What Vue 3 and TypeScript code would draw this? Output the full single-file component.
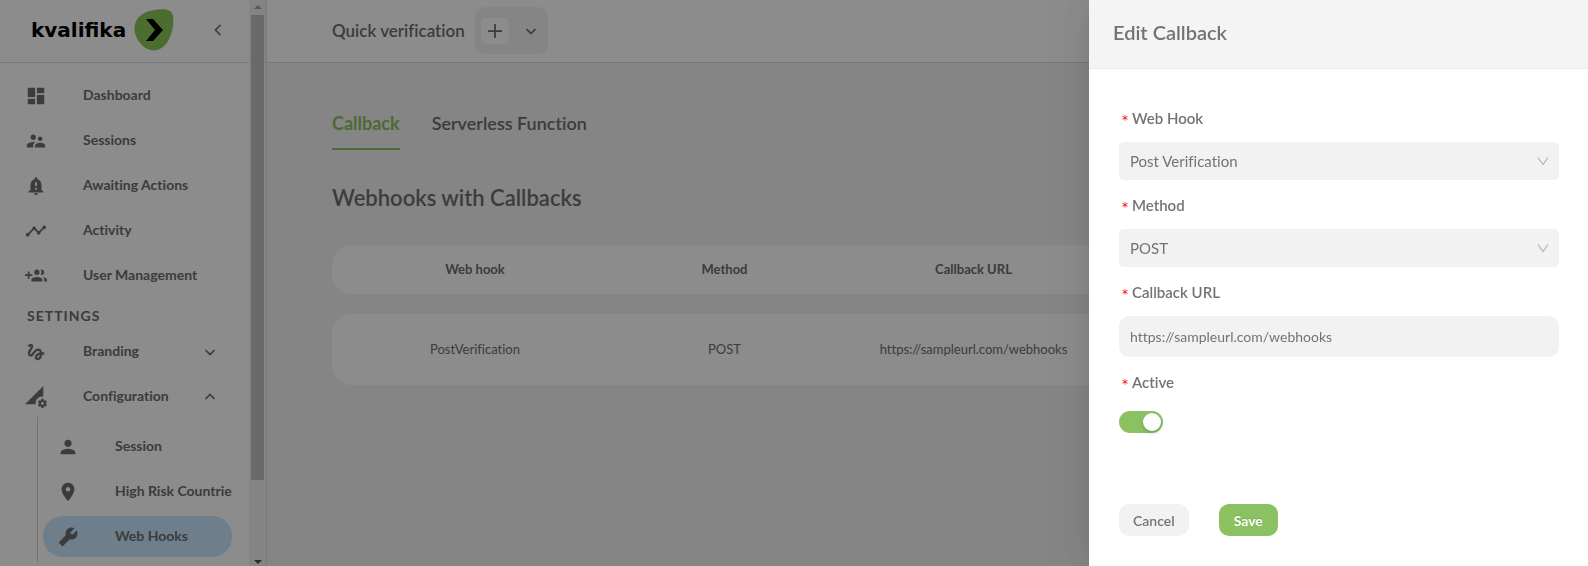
<script setup lang="ts">
import { ref } from 'vue'

interface NavItem {
  label: string
  icon: string
  box?: string
  toggle?: 'down' | 'up'
  active?: boolean
}

const icons = {
  dashboard: 'M3 13h8V3H3v10zm0 8h8v-6H3v6zm10 0h8V11h-8v10zm0-18v6h8V3h-8z',
  people:
    'M16.5 12c1.38 0 2.49-1.12 2.49-2.5S17.88 7 16.5 7C15.12 7 14 8.12 14 9.5s1.12 2.5 2.5 2.5zM9 11c1.66 0 2.99-1.34 2.99-3S10.66 5 9 5C7.34 5 6 6.34 6 8s1.34 3 3 3zm7.5 3c-1.83 0-5.5.92-5.5 2.75V19h11v-2.25c0-1.83-3.67-2.75-5.5-2.75zM9 13c-2.33 0-7 1.17-7 3.5V19h7v-2.25c0-.85.33-2.34 2.37-3.47C10.5 13.1 9.66 13 9 13z',
  bell:
    'M18 16v-5c0-3.07-1.64-5.64-4.5-6.32V4c0-.83-.67-1.5-1.5-1.5s-1.5.67-1.5 1.5v.68C7.63 5.36 6 7.92 6 11v5l-2 2v1h16v-1l-2-2zm-5 0h-2v-2h2v2zm0-4h-2V8h2v4zm-1 10c1.1 0 2-.9 2-2h-4c0 1.1.89 2 2 2z',
  timeline:
    'M23 8c0 1.1-.9 2-2 2-.18 0-.35-.02-.51-.07l-3.56 3.55c.05.16.07.34.07.52 0 1.1-.9 2-2 2s-2-.9-2-2c0-.18.02-.36.07-.52l-2.55-2.55c-.16.05-.34.07-.52.07s-.36-.02-.52-.07l-4.55 4.56c.05.16.07.33.07.51 0 1.1-.9 2-2 2s-2-.9-2-2 .9-2 2-2c.18 0 .35.02.51.07l4.56-4.55C8.02 9.36 8 9.18 8 9c0-1.1.9-2 2-2s2 .9 2 2c0 .18-.02.36-.07.52l2.55 2.55c.16-.05.34-.07.52-.07s.36.02.52.07l3.55-3.56C19.02 8.35 19 8.18 19 8c0-1.1.9-2 2-2s2 .9 2 2z',
  groupAdd:
    'M8 10H5V7H3v3H0v2h3v3h2v-3h3v-2zm10 1c1.66 0 2.99-1.34 2.99-3S19.66 5 18 5c-.32 0-.63.05-.91.14.57.81.9 1.79.9 2.86s-.34 2.04-.9 2.86c.28.09.59.14.91.14zm-5 0c1.66 0 2.99-1.34 2.99-3S14.66 5 13 5c-1.66 0-3 1.34-3 3s1.34 3 3 3zm6.62 2.16c.83.73 1.38 1.66 1.38 2.84v2h3v-2c0-1.54-2.37-2.49-4.38-2.84zM13 13c-2 0-6 1-6 3v2h12v-2c0-2-4-3-6-3z',
  gesture:
    'M4.59 6.89c.7-.71 1.4-1.35 1.71-1.22.5.2 0 1.03-.3 1.52-.25.42-2.86 3.89-2.86 6.31 0 1.28.48 2.34 1.34 2.98.75.56 1.74.73 2.64.46 1.07-.31 1.95-1.4 3.06-2.77 1.21-1.49 2.83-3.44 4.08-3.44 1.63 0 1.65 1.01 1.76 1.79-3.78.64-5.38 3.67-5.38 5.37 0 1.7 1.44 3.09 3.21 3.09 1.63 0 4.29-1.33 4.69-6.1H21v-2.5h-2.47c-.15-1.65-1.09-4.2-4.03-4.2-2.25 0-4.18 1.91-4.94 2.84-.58.73-2.06 2.48-2.29 2.72-.25.3-.68.84-1.11.84-.45 0-.72-.83-.36-1.92.35-1.09 1.4-2.86 1.85-3.52.78-1.14 1.3-1.92 1.3-3.28C8.95 3.69 7.31 3 6.44 3 5.12 3 3.97 4 3.72 4.25c-.36.36-.66.66-.88.93l1.75 1.71zm9.29 11.66c-.31 0-.74-.26-.74-.72 0-.6.73-2.2 2.87-2.76-.3 2.69-1.43 3.48-2.13 3.48z',
  dataSetting:
    'M18.99 11.5c.34 0 .67.03 1 .07L20 0 0 20h11.56c-.04-.33-.07-.66-.07-1 0-4.14 3.36-7.5 7.5-7.5zm3.71 7.99c.02-.16.04-.32.04-.49 0-.17-.01-.33-.04-.49l1.06-.83c.09-.08.12-.21.06-.32l-1-1.73c-.06-.11-.19-.15-.31-.11l-1.24.5c-.26-.2-.54-.37-.85-.49l-.19-1.32c-.01-.12-.12-.21-.24-.21h-2c-.12 0-.23.09-.25.21l-.19 1.32c-.3.13-.59.29-.85.49l-1.24-.5c-.11-.04-.24 0-.31.11l-1 1.73c-.06.11-.04.24.06.32l1.06.83c-.02.16-.03.32-.03.49 0 .17.01.33.03.49l-1.06.83c-.09.08-.12.21-.06.32l1 1.73c.06.11.19.15.31.11l1.24-.5c.26.2.54.37.85.49l.19 1.32c.02.12.12.21.25.21h2c.12 0 .23-.09.25-.21l.19-1.32c.3-.13.59-.29.84-.49l1.25.5c.11.04.24 0 .31-.11l1-1.73c.06-.11.03-.24-.06-.32l-1.07-.83zm-3.71 1.01c-.83 0-1.5-.67-1.5-1.5s.67-1.5 1.5-1.5 1.5.67 1.5 1.5-.67 1.5-1.5 1.5z',
  person:
    'M12 12c2.21 0 4-1.79 4-4s-1.79-4-4-4-4 1.79-4 4 1.79 4 4 4zm0 2c-2.67 0-8 1.34-8 4v2h16v-2c0-2.66-5.33-4-8-4z',
  place:
    'M12 2C8.13 2 5 5.13 5 9c0 5.25 7 13 7 13s7-7.75 7-13c0-3.87-3.13-7-7-7zm0 9.5c-1.38 0-2.5-1.12-2.5-2.5s1.12-2.5 2.5-2.5 2.5 1.12 2.5 2.5-1.12 2.5-2.5 2.5z',
  tool:
    'M865.3 244.7c-.3-.3-61.1 59.8-182.1 180.6l-84.9-84.9 180.9-180.9c-95.2-57.3-217.5-42.6-296.8 36.7A244.42 244.42 0 00419 432l1.8 6.7-283.5 283.4c-6.2 6.2-6.2 16.4 0 22.6l141.4 141.4c6.2 6.2 16.4 6.2 22.6 0l283.3-283.3 6.7 1.8c83.7 22.3 173.6-.9 236-63.3 79.4-79.3 94.1-201.6 38-296.6z',
}

const mainItems: NavItem[] = [
  { label: 'Dashboard', icon: icons.dashboard },
  { label: 'Sessions', icon: icons.people },
  { label: 'Awaiting Actions', icon: icons.bell },
  { label: 'Activity', icon: icons.timeline },
  { label: 'User Management', icon: icons.groupAdd },
]

const settingsItems: NavItem[] = [
  { label: 'Branding', icon: icons.gesture, toggle: 'down' },
  { label: 'Configuration', icon: icons.dataSetting, toggle: 'up' },
]

const subItems: NavItem[] = [
  { label: 'Session', icon: icons.person },
  { label: 'High Risk Countrie', icon: icons.place },
  { label: 'Web Hooks', icon: icons.tool, box: '64 64 896 896', active: true },
]

const rows = [{ hook: 'PostVerification', method: 'POST', url: 'https://sampleurl.com/webhooks' }]

const hook = ref('Post Verification')
const method = ref('POST')
const url = ref('https://sampleurl.com/webhooks')
const active = ref(true)
</script>

<template>
  <div class="app">
    <aside class="sidebar">
      <div class="brand">
        <a class="logo" href="#">
          <span>kvalifika</span>
          <svg width="40" height="42" viewBox="0 0 40 42" aria-hidden="true">
            <path d="M20 1C28-.5 36 0 38 4c2.500 6 1.500 16-2 24-3 8-9 13.500-17 13.500C9 41 0 29 .5 19 1 8 9 3 20 1z" fill="#8ac758" />
            <path d="M12 10h7l10 11-10 11h-7l9-11z" fill="#000" />
          </svg>
        </a>
        <button class="collapse" type="button" aria-label="Collapse menu">
          <svg width="12" height="12" viewBox="0 0 12 12"><path d="M8.500 1l-5 5 5 5" /></svg>
        </button>
      </div>
      <nav class="nav">
        <a v-for="item in mainItems" :key="item.label" class="item" href="#">
          <svg class="icon" viewBox="0 0 24 24" aria-hidden="true"><path :d="item.icon" /></svg>
          <span>{{ item.label }}</span>
        </a>
        <h2 class="group">SETTINGS</h2>
        <button v-for="item in settingsItems" :key="item.label" class="item" type="button">
          <svg class="icon" viewBox="0 0 24 24" aria-hidden="true"><path :d="item.icon" /></svg>
          <span>{{ item.label }}</span>
          <svg class="chevron" :class="item.toggle" viewBox="0 0 12 12" aria-hidden="true"><path d="M1.500 4L6 8.500 10.500 4" /></svg>
        </button>
        <div class="sub">
          <a v-for="item in subItems" :key="item.label" class="item" :class="{ active: item.active }" href="#">
            <svg class="icon" :viewBox="item.box ?? '0 0 24 24'" aria-hidden="true"><path :d="item.icon" /></svg>
            <span>{{ item.label }}</span>
          </a>
        </div>
      </nav>
    </aside>
    <div class="scroll" aria-hidden="true">
      <svg width="8" height="4" viewBox="0 0 8 4"><path d="M0 4l4-4 4 4z" fill="#a3a3a3" /></svg>
      <div class="thumb"></div>
      <svg width="8" height="4" viewBox="0 0 8 4"><path d="M0 0l4 4 4-4z" fill="#505050" /></svg>
    </div>

    <main class="main">
      <header class="topbar">
        <h1>Quick verification</h1>
        <div class="tools">
          <button class="add" type="button" aria-label="Add">
            <svg width="14" height="14" viewBox="0 0 14 14"><path d="M7 0v14M0 7h14" /></svg>
          </button>
          <button class="more" type="button" aria-label="More">
            <svg width="12" height="12" viewBox="0 0 12 12"><path d="M1.500 4L6 8.500 10.500 4" /></svg>
          </button>
        </div>
      </header>
      <div class="content">
        <div class="tabs" role="tablist">
          <button class="tab selected" type="button" role="tab" aria-selected="true">Callback</button>
          <button class="tab" type="button" role="tab" aria-selected="false">Serverless Function</button>
        </div>
        <h2 class="title">Webhooks with Callbacks</h2>
        <table class="table">
          <colgroup>
            <col class="first" />
            <col class="col" />
            <col class="col" />
            <col />
          </colgroup>
          <thead>
            <tr>
              <th>Web hook</th>
              <th>Method</th>
              <th>Callback URL</th>
              <td></td>
            </tr>
          </thead>
          <tbody>
            <tr v-for="row in rows" :key="row.url">
              <td>{{ row.hook }}</td>
              <td>{{ row.method }}</td>
              <td>{{ row.url }}</td>
              <td></td>
            </tr>
          </tbody>
        </table>
      </div>
    </main>

    <div class="mask"></div>
    <section class="drawer" role="dialog" aria-labelledby="drawer-title">
      <header class="drawer-head"><h2 id="drawer-title">Edit Callback</h2></header>
      <form class="form" @submit.prevent>
        <label for="hook">Web Hook</label>
        <div class="select">
          <select id="hook" v-model="hook"><option>Post Verification</option></select>
          <svg width="12" height="10" viewBox="0 0 12 10" aria-hidden="true"><path d="M1 1.500l5 7 5-7" /></svg>
        </div>
        <label for="method">Method</label>
        <div class="select">
          <select id="method" v-model="method"><option>POST</option></select>
          <svg width="12" height="10" viewBox="0 0 12 10" aria-hidden="true"><path d="M1 1.500l5 7 5-7" /></svg>
        </div>
        <label for="url">Callback URL</label>
        <input id="url" v-model="url" class="text" type="text" />
        <label for="active">Active</label>
        <input id="active" v-model="active" class="switch" type="checkbox" role="switch" />
        <div class="actions">
          <button class="cancel" type="button">Cancel</button>
          <button class="save" type="submit">Save</button>
        </div>
      </form>
    </section>
  </div>
</template>

<style>
body {
  margin: 0;
  background: #f2f2f2;
}
</style>

<style scoped>
.app {
  display: flex;
  height: 100vh;
  overflow: hidden;
  color: #6e6e6e;
  font-family: Lato, 'Open Sans', sans-serif;
  font-size: 14px;
  font-variant-ligatures: none;
}
.app * {
  box-sizing: border-box;
}
h1,
h2 {
  margin: 0;
}
button,
input,
select {
  font: inherit;
  font-variant-ligatures: none;
  color: inherit;
  margin: 0;
}
button {
  border: 0;
  padding: 0;
  background: none;
  cursor: pointer;
}
a {
  color: inherit;
  text-decoration: none;
}
svg {
  display: block;
  flex: none;
}
.collapse path,
.chevron path,
.tools path {
  fill: none;
  stroke: #6e6e6e;
  stroke-width: 1.75;
}
.sidebar {
  flex: 0 0 249px;
  background: #fff;
  overflow: hidden;
}
.brand {
  display: flex;
  align-items: center;
  justify-content: space-between;
  height: 63px;
  padding: 0 25px 2px 31px;
  border-bottom: 1px solid #d9d9d9;
}
.logo {
  display: flex;
  align-items: center;
  gap: 8px;
  color: #000;
  font: bold 20px 'DejaVu Sans', sans-serif;
}
.nav {
  padding: 12px 17px 0 11px;
}
.item {
  display: flex;
  align-items: center;
  width: 100%;
  height: 41px;
  margin-bottom: 4px;
  padding: 0 16px 0 14px;
  border-radius: 20px;
  white-space: nowrap;
  font-size: 14px;
  font-weight: 700;
}
.item span {
  padding-bottom: 3px;
}
.item .icon {
  width: 22px;
  height: 22px;
  margin-right: 36px;
  fill: #6e6e6e;
}
.chevron {
  width: 12px;
  height: 12px;
  margin-left: auto;
}
.chevron.up {
  transform: rotate(180deg);
}
.group {
  height: 31px;
  padding-left: 16px;
  font-size: 14px;
  font-weight: 700;
  line-height: 32px;
  letter-spacing: 1px;
}
.sub {
  margin: -4px 0 0 26px;
  padding: 9px 0 1px 5px;
  border-left: 1px solid #d0d0d0;
}
.sub .item {
  padding-right: 0;
}
.item.active {
  background: #c9e5fb;
}
.scroll {
  flex: 0 0 18px;
  display: flex;
  flex-direction: column;
  align-items: center;
  padding: 5px 2px 2px;
  border-right: 1px solid #dcdcdc;
  background: #f1f1f1;
}
.thumb {
  flex: 0 0 465px;
  width: 13px;
  margin: 6px 0 auto;
  background: #c1c1c1;
}
.main {
  flex: 1;
  min-width: 0;
  background: #f2f2f2;
}
.topbar {
  display: flex;
  align-items: center;
  gap: 10px;
  height: 63px;
  padding: 0 65px 1px;
  border-bottom: 1px solid #d9d9d9;
  background: #fff;
}
.topbar h1 {
  font-size: 17px;
  font-weight: 600;
}
.tools {
  display: flex;
  align-items: center;
  gap: 16px;
  height: 47px;
  padding: 0 11px 0 6px;
  border-radius: 10px;
  background: #f2f2f2;
}
.add {
  padding: 6px 7px;
  border-radius: 5px;
  background: #fff;
}
.content {
  padding: 45px 65px;
}
.tabs {
  display: flex;
  gap: 32px;
}
.tab {
  height: 42px;
  padding-bottom: 10px;
  border-bottom: 2px solid transparent;
  font-size: 18px;
  font-weight: 600;
}
.tab.selected {
  border-color: #8cc162;
  color: #8cc162;
  font-weight: 700;
}
.title {
  margin-top: 32px;
  font-size: 22px;
  font-weight: 600;
  line-height: 32px;
}
.table {
  width: 100%;
  margin-top: 11px;
  table-layout: fixed;
  border-spacing: 0 20px;
}
.first {
  width: 268px;
}
.col {
  width: 249px;
}
.table th,
.table td {
  padding: 0 0 2px;
  background: #fff;
  font-size: 13px;
  text-align: center;
}
.table th {
  font-weight: 700;
}
.table tr > :first-child {
  padding-left: 18px;
  border-radius: 20px 0 0 20px;
}
.table tr > :last-child {
  border-radius: 0 20px 20px 0;
}
thead tr {
  height: 49px;
}
tbody tr {
  height: 71px;
}
.mask {
  position: fixed;
  inset: 0;
  background: rgba(0, 0, 0, 0.45);
}
.drawer {
  position: fixed;
  top: 0;
  right: 0;
  bottom: 0;
  width: 499px;
  background: #fff;
  color: #737373;
  box-shadow: -6px 0 16px -8px rgba(0, 0, 0, 0.08), -9px 0 28px rgba(0, 0, 0, 0.05), -12px 0 48px 16px rgba(0, 0, 0, 0.03);
}
.drawer-head {
  height: 69px;
  padding: 16px 24px;
  border-bottom: 1px solid #ebebeb;
  background: #f4f4f4;
}
.drawer-head h2 {
  font-size: 20px;
  font-weight: 600;
  line-height: 32px;
}
.form {
  display: flex;
  flex-direction: column;
  padding: 34px 29px 30px 30px;
  font-size: 15px;
}
.form label {
  display: flex;
  align-items: center;
  gap: 4px;
  align-self: flex-start;
  height: 30px;
  margin-bottom: 9px;
  padding-left: 3px;
  font-weight: 600;
}
.form label::before {
  content: '*';
  padding-top: 4px;
  color: #f00;
  font: 12px 'DejaVu Sans', sans-serif;
}
.select {
  display: flex;
  align-items: center;
  position: relative;
  margin-bottom: 10px;
}
.select select {
  flex: 1;
  height: 38px;
  padding: 0 11px;
  border: 0;
  border-radius: 5px;
  background: #f2f2f2;
  appearance: none;
}
.select svg {
  position: absolute;
  right: 10px;
  pointer-events: none;
}
.select path {
  fill: none;
  stroke: #b4b4b4;
  stroke-width: 1.25;
}
.text {
  height: 41px;
  margin-bottom: 10px;
  padding: 0 11px;
  border: 0;
  border-radius: 10px;
  background: #f2f2f2;
  font-size: 14px;
}
.switch {
  display: flex;
  width: 44px;
  height: 22px;
  margin: 5px 0 71px;
  padding: 2px;
  border-radius: 11px;
  background: #ccc;
  appearance: none;
}
.switch::before {
  content: '';
  width: 18px;
  height: 18px;
  border-radius: 50%;
  background: #fff;
  box-shadow: 0 2px 4px rgba(0, 35, 11, 0.2);
}
.switch:checked {
  justify-content: flex-end;
  background: #8cc162;
}
.actions {
  display: flex;
  gap: 30px;
}
.actions button {
  height: 32px;
  padding: 0 15px;
  border-radius: 10px;
  background: #f2f2f2;
  font-size: 14px;
  font-weight: 600;
}
.actions .cancel {
  padding: 0 14px;
}
.actions .save {
  background: #8cc162;
  color: #fff;
  font-weight: 700;
  text-shadow: 0 -1px 0 rgba(0, 0, 0, 0.12);
}
</style>
